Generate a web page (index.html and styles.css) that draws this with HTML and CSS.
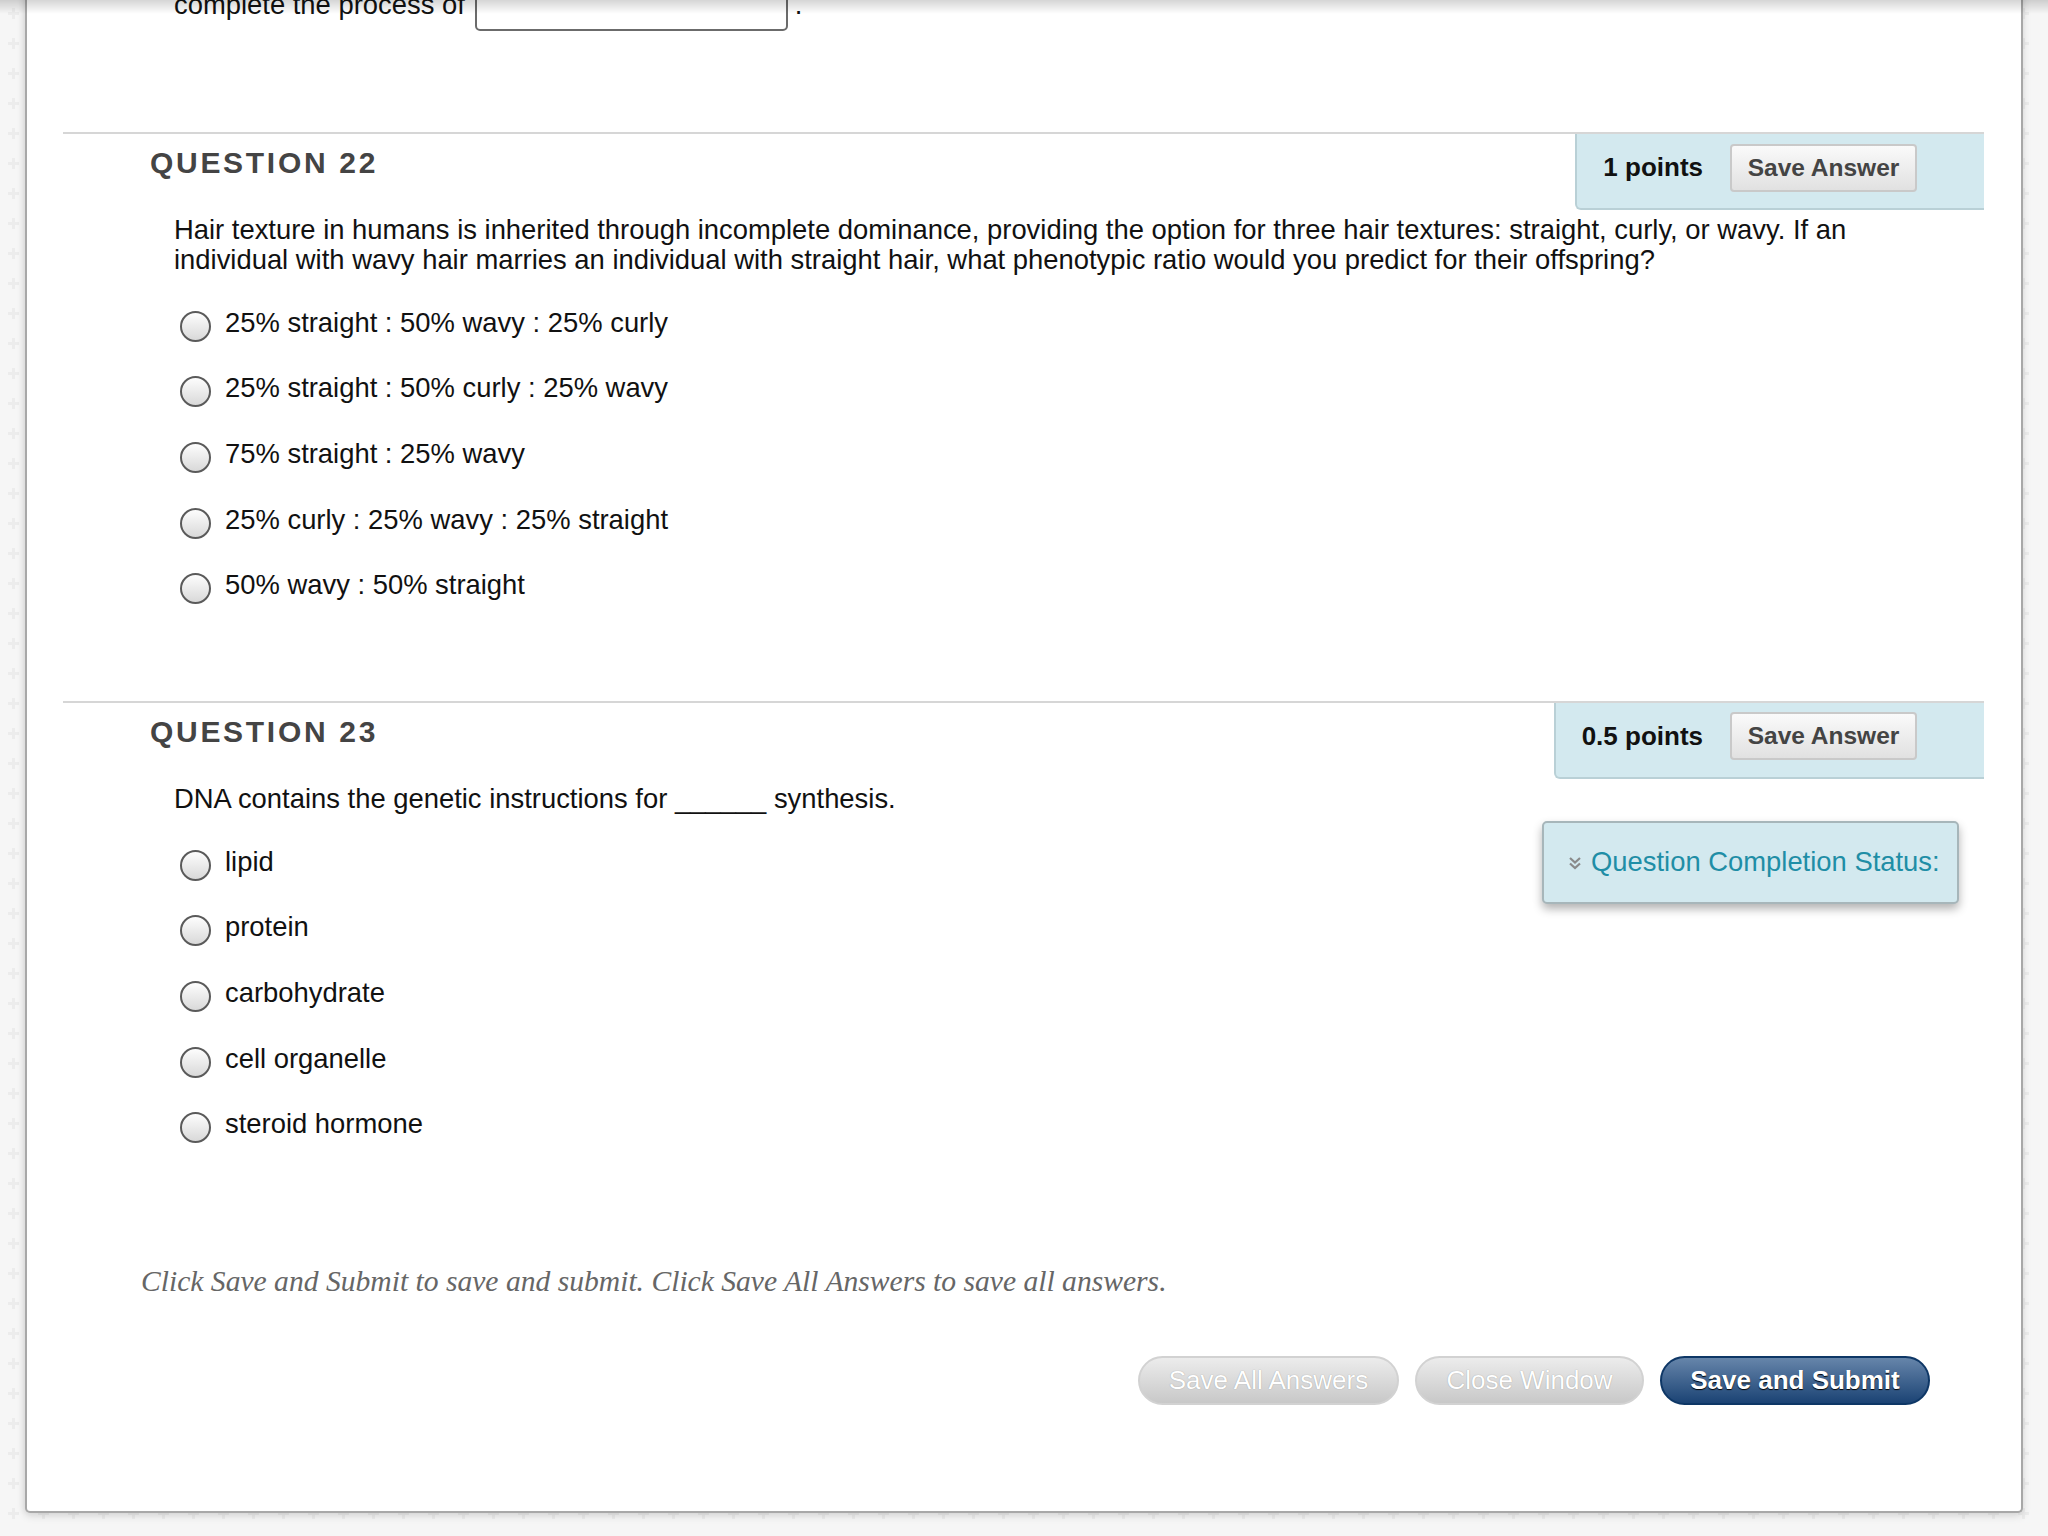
FILE: index.html
```html
<!DOCTYPE html>
<html lang="en">
<head>
  <meta charset="UTF-8" />
  <meta name="viewport" content="width=device-width, initial-scale=1.0"/>
  <title>Take Test</title>
  <link rel="stylesheet" href="styles.css">
</head>
<body>
  <div class="page">
    <!-- end of the previous question -->
    <div class="tail">
      <span class="tail-text">complete the process of</span>
      <input type="text" class="blank" />
      <span class="tail-text">.</span>
    </div>

    <div class="question">
      <div class="q-head">
        <h3 class="q-title">Question 22</h3>
        <div class="points">
          <span class="points-value">1 points</span>
          <button class="save-answer">Save Answer</button>
        </div>
      </div>
      <div class="q-body">
        <div class="q-main">
          <p class="q-text">Hair texture in humans is inherited through incomplete dominance, providing the option for three hair textures: straight, curly, or wavy. If an individual with wavy hair marries an individual with straight hair, what phenotypic ratio would you predict for their offspring?</p>
          <ul class="options">
            <li><input type="radio" name="q22" />25% straight : 50% wavy : 25% curly</li>
            <li><input type="radio" name="q22" />25% straight : 50% curly : 25% wavy</li>
            <li><input type="radio" name="q22" />75% straight : 25% wavy</li>
            <li><input type="radio" name="q22" />25% curly : 25% wavy : 25% straight</li>
            <li><input type="radio" name="q22" />50% wavy : 50% straight</li>
          </ul>
        </div>
      </div>
    </div>

    <div class="question">
      <div class="q-head">
        <h3 class="q-title">Question 23</h3>
        <div class="points">
          <span class="points-value">0.5 points</span>
          <button class="save-answer">Save Answer</button>
        </div>
      </div>
      <div class="q-body">
        <div class="q-main">
          <p class="q-text">DNA contains the genetic instructions for ______ synthesis.</p>
          <ul class="options">
            <li><input type="radio" name="q23" />lipid</li>
            <li><input type="radio" name="q23" />protein</li>
            <li><input type="radio" name="q23" />carbohydrate</li>
            <li><input type="radio" name="q23" />cell organelle</li>
            <li><input type="radio" name="q23" />steroid hormone</li>
          </ul>
        </div>
        <div class="status">
          <svg class="chevrons" width="14" height="14" viewBox="0 0 14 14" aria-hidden="true">
            <path d="M2 2 L7 6.5 L12 2" fill="none" stroke="#8a8a8a" stroke-width="2.2"/>
            <path d="M2 7.5 L7 12 L12 7.5" fill="none" stroke="#8a8a8a" stroke-width="2.2"/>
          </svg>
          <span>Question Completion Status:</span>
        </div>
      </div>
    </div>

    <div class="footer">
      <p class="instructions">Click Save and Submit to save and submit. Click Save All Answers to save all answers.</p>
      <div class="actions">
        <button class="btn btn-disabled save-all">Save All Answers</button>
        <button class="btn btn-disabled close-window">Close Window</button>
        <button class="btn btn-primary submit">Save and Submit</button>
      </div>
    </div>
  </div>
</body>
</html>
```

FILE: styles.css
```css
:root {
  --text-color: #111;
  --heading-color: #444;
  --box-blue: #d3e9ef;
  --box-border: #b9d0d6;
  --teal: #1f8ea6;
  --body-size: 27.4px;
}
* { box-sizing: border-box; }
html, body { margin: 0; padding: 0; }
body {
  height: 1536px;
  overflow: hidden;
  font-family: "Liberation Sans", Arial, Helvetica, sans-serif;
  color: var(--text-color);
  background-color: #f6f6f6;
  background-image: url("data:image/svg+xml,%3Csvg xmlns='http://www.w3.org/2000/svg' width='30' height='30'%3E%3Cpath d='M12 8h3v4h4v3h-4v4h-3v-4H8v-3h4z' fill='%23ececec'/%3E%3C/svg%3E");
}
/* toolbar shadow along the top edge */
body::before {
  content: "";
  position: fixed;
  top: 0; left: 0; right: 0;
  height: 14px;
  background: linear-gradient(rgba(0,0,0,0.16), rgba(0,0,0,0));
  z-index: 5;
}
.page {
  margin: -13px 0 0 25px;
  width: 1998px;
  background: #fff;
  border: 2px solid #a8a8a8;
  border-top: none;
  border-radius: 0 0 5px 5px;
  box-shadow: 0 3px 8px rgba(0,0,0,0.12), -2px 0 6px rgba(0,0,0,0.06);
  padding-bottom: 106px;
}

.tail {
  display: flex;
  align-items: center;
  height: 44px;
  padding-left: 147px;
  font-size: var(--body-size);
}
.tail-text { padding-bottom: 8px; }
.blank {
  width: 313px;
  height: 44px;
  margin: 0 7px 0 10px;
  border: 2px solid #6b6b6b;
  border-radius: 5px;
  background: #fff;
}

.question {
  margin: 101px 37px 0 36px;
  border-top: 2px solid #d6d6d6;
}
.question + .question { margin-top: 83px; }
.q-head {
  display: flex;
  justify-content: space-between;
  align-items: flex-start;
  height: 76px;
}
.q-title {
  margin: 11px 0 0 87px;
  font-size: 30px;
  line-height: 36px;
  font-weight: bold;
  letter-spacing: 2.7px;
  text-transform: uppercase;
  color: var(--heading-color);
}
.points {
  display: flex;
  align-items: center;
  gap: 27px;
  height: 76px;
  padding: 0 67px 7px 26px;
  background: var(--box-blue);
  border-left: 2px solid var(--box-border);
  border-bottom: 2px solid var(--box-border);
  border-bottom-left-radius: 6px;
}
.points-value { font-size: 26px; font-weight: bold; }
.save-answer {
  width: 187px;
  height: 48px;
  padding: 0;
  font: bold 24.5px "Liberation Sans", Arial, sans-serif;
  color: var(--heading-color);
  background: linear-gradient(#fafafa, #e1e1e1);
  border: 2px solid #c9c9c9;
  border-radius: 4px;
}

.q-body { display: flex; align-items: flex-start; }
.q-main { flex: 1; padding-left: 111px; }
.q-text {
  margin: 5px 0 0;
  max-width: 1700px;
  font-size: var(--body-size);
  line-height: 30px;
}
.options { list-style: none; margin: 15px 0 0; padding: 0 0 0 6px; }
.options li {
  display: flex;
  align-items: center;
  height: 65.6px;
  font-size: var(--body-size);
}
.options input[type="radio"] {
  appearance: none;
  -webkit-appearance: none;
  flex: none;
  width: 31px;
  height: 31px;
  margin: 7px 14px 0 0;
  border: 2px solid #5a5a5a;
  border-radius: 50%;
  background: linear-gradient(#fdfdfd, #d9d9d9);
}

.status {
  display: flex;
  align-items: center;
  gap: 9px;
  width: 417px;
  height: 83px;
  margin: 42px 25px 0 0;
  padding-left: 24px;
  background: var(--box-blue);
  border: 2px solid #a7b6ba;
  border-radius: 5px;
  box-shadow: 0 5px 10px rgba(0,0,0,0.3);
  color: var(--teal);
  font-size: var(--body-size);
}
.chevrons { flex: none; margin-top: 2px; }

.instructions {
  margin: 106px 0 0 114px;
  font: italic 29.6px/36px "Liberation Serif", Georgia, serif;
  color: #666;
}
.actions {
  display: flex;
  justify-content: flex-end;
  gap: 16px;
  margin: 57px 91px 0 0;
}
.btn {
  height: 49px;
  padding: 0;
  border-radius: 25px;
  font: 26px "Liberation Sans", Arial, sans-serif;
  color: #fff;
}
.btn-disabled {
  background: linear-gradient(#ececec, #c8c8c8);
  border: 2px solid #d2d2d2;
  text-shadow: 0 0 1px rgba(0,0,0,0.35);
}
.save-all { width: 261px; }
.close-window { width: 229px; }
.btn-primary {
  width: 270px;
  font-weight: bold;
  background: linear-gradient(#6685aa, #1b4374);
  border: 2px solid #0e3766;
  text-shadow: 0 1px 1px #000;
}
```
